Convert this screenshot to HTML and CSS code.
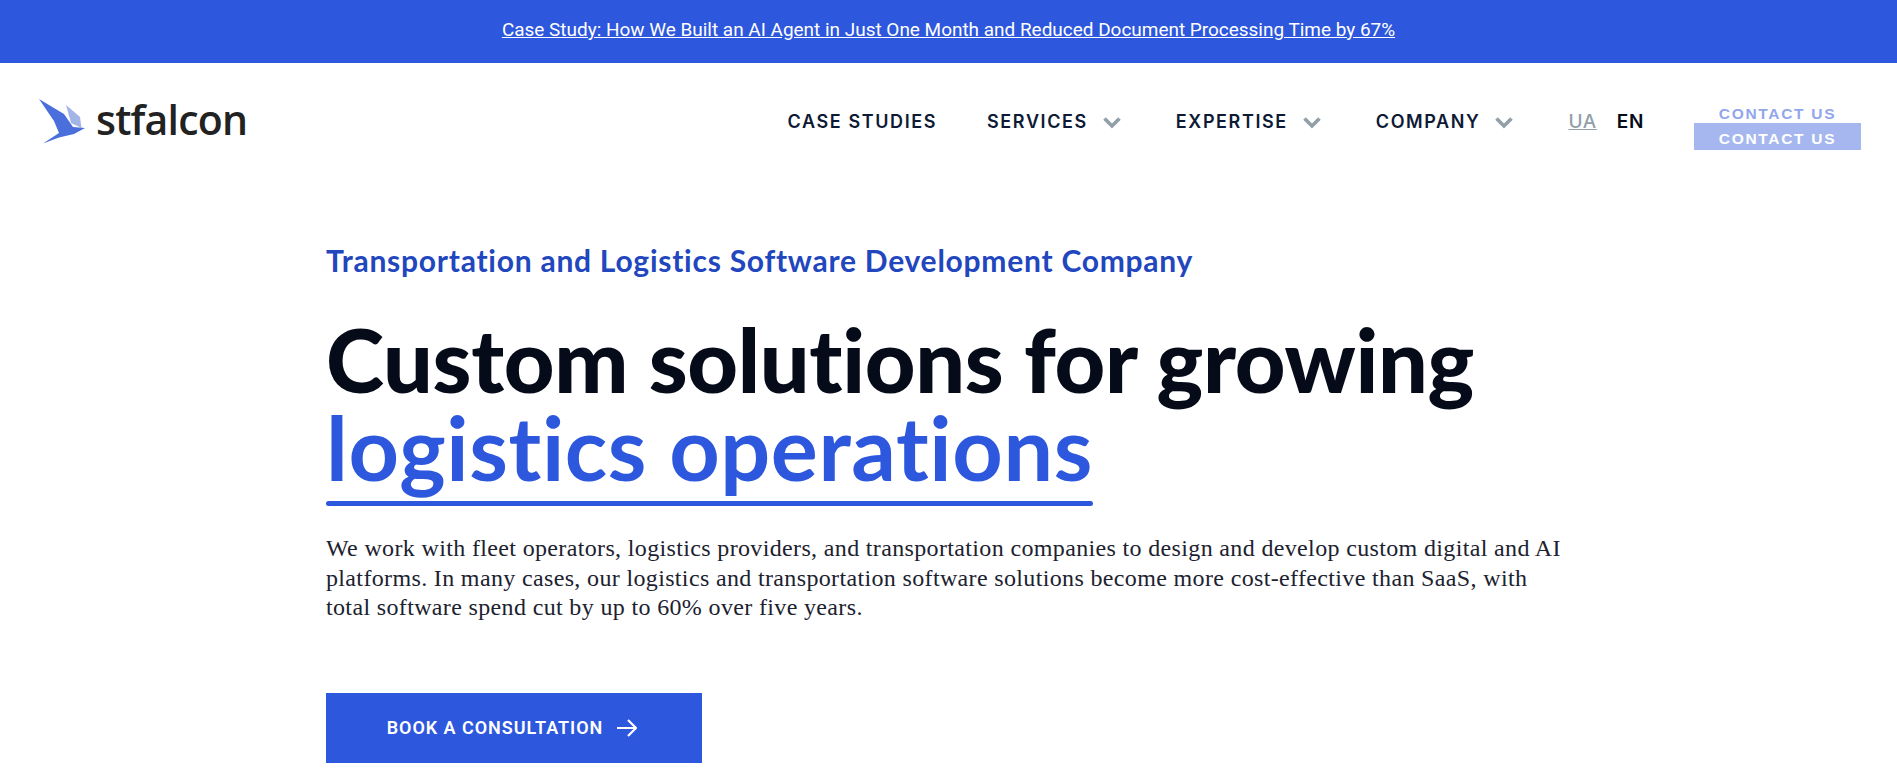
FILE: index.html
```html
<!DOCTYPE html>
<html lang="en">
  <head>
    <meta charset="UTF-8">
    <title>Stfalcon</title>
    <meta name="viewport" content="width=device-width, initial-scale=1.0">
    <link rel="stylesheet" href="styles.css">
  </head>
  <body>

    <div class="promo">
      <a href="#">Case Study: How We Built an AI Agent in Just One Month and Reduced Document Processing Time by 67%</a>
    </div>

    <header class="topbar">
      <a class="logo" href="#">
        <svg class="logo-bird" width="46" height="45" viewBox="0 0 46 45">
          <path fill="#a3b4e6" d="M27 6 L41 18 L42.5 29 L32 24 Z"/>
          <path fill="#4a6fdc" d="M0 0 L25 15 L34 28 L46 29 L35 35 L20 38.5 L4 44.5 L20 34 L15 22 Z"/>
        </svg>
        <span class="logo-text">stfalcon</span>
      </a>

      <nav class="menu">
        <a class="menu-item" href="#">CASE STUDIES</a>
        <a class="menu-item" href="#">SERVICES <svg class="chev" width="18" height="12" viewBox="0 0 18 12"><path d="M1.5 1.5 L9 9 L16.5 1.5" fill="none" stroke="#91a0a8" stroke-width="3.6"/></svg></a>
        <a class="menu-item" href="#">EXPERTISE <svg class="chev" width="18" height="12" viewBox="0 0 18 12"><path d="M1.5 1.5 L9 9 L16.5 1.5" fill="none" stroke="#91a0a8" stroke-width="3.6"/></svg></a>
        <a class="menu-item" href="#">COMPANY <svg class="chev" width="18" height="12" viewBox="0 0 18 12"><path d="M1.5 1.5 L9 9 L16.5 1.5" fill="none" stroke="#91a0a8" stroke-width="3.6"/></svg></a>
      </nav>

      <div class="langs">
        <a class="lang-ua" href="#">UA</a>
        <span class="lang-en">EN</span>
      </div>

      <a class="contact" href="#">
        <span class="contact-top">CONTACT US</span>
        <span class="contact-bottom">CONTACT US</span>
      </a>
    </header>

    <main class="hero">
      <h2 class="hero-kicker">Transportation and Logistics Software Development Company</h2>
      <h1 class="hero-title"><span class="hero-dark">Custom solutions for growing</span><br><span class="hero-accent">logistics operations</span></h1>
      <p class="hero-text">We work with fleet operators, logistics providers, and transportation companies to design and develop custom digital and AI platforms. In many cases, our logistics and transportation software solutions become more cost-effective than SaaS, with total software spend cut by up to 60% over five years.</p>
      <a class="cta" href="#">BOOK A CONSULTATION
        <svg width="20" height="20" viewBox="0 0 20 20"><path d="M0 10 H19 M11 2 L19 10 L11 18" fill="none" stroke="#fff" stroke-width="2.2"/></svg>
      </a>
    </main>

  </body>
</html>
```

FILE: styles.css
```css
* { box-sizing: border-box; }

html, body {
  height: 776px;
  overflow: hidden;
}

body {
  margin: 0;
  background: #fff;
  color: #050b18;
  font-family: Roboto, Arial, sans-serif;
}

a {
  color: inherit;
  text-decoration: none;
}

/* PROMO */
.promo {
  height: 63px;
  padding-bottom: 4px;
  background: #2d57dd;
  color: #fff;
  display: flex;
  align-items: center;
  justify-content: center;
  font-size: 18.97px;
}

.promo a {
  text-decoration: underline;
}

/* HEADER */
.topbar {
  height: 116px;
  padding: 0 36px 0 39px;
  display: flex;
  align-items: center;
}

.logo {
  display: flex;
  align-items: center;
  gap: 11px;
  color: #222;
}

.logo-text {
  margin-top: -5px;
  font-family: "Open Sans", sans-serif;
  font-size: 41px;
  font-weight: 600;
  letter-spacing: -0.8px;
}

.menu {
  margin-left: auto;
  display: flex;
  align-items: center;
  gap: 50px;
}

.menu-item {
  display: flex;
  align-items: center;
  gap: 15px;
  font-family: Inter, sans-serif;
  font-size: 18px;
  font-weight: 600;
  letter-spacing: 1.6px;
  color: #0e1a35;
}

.chev {
  margin: 3px 5px 0 0;
}

.langs {
  margin-left: 50px;
  display: flex;
  gap: 20px;
  font-family: Inter, sans-serif;
  font-size: 19px;
  font-weight: 600;
  letter-spacing: 0.6px;
}

.lang-ua {
  color: #91a0a8;
  font-weight: 500;
  text-decoration: underline;
}

.lang-en {
  color: #050b18;
}

.contact {
  margin: 8px 0 0 50px;
  width: 167px;
  display: flex;
  flex-direction: column;
  align-items: center;
  font-family: "Liberation Sans", Arial, sans-serif;
  font-size: 15.5px;
  font-weight: bold;
  letter-spacing: 1.7px;
}

.contact-top {
  color: #92a6ec;
  height: 22px;
  line-height: 26px;
}

.contact-bottom {
  width: 100%;
  height: 27px;
  line-height: 31px;
  background: #a5b7ee;
  color: #fff;
  text-align: center;
}

/* HERO */
.hero {
  padding: 63px 0 0 326px;
  width: 1580px;
}

.hero-kicker {
  margin: 0;
  font-family: Lato, sans-serif;
  font-size: 30px;
  font-weight: 700;
  line-height: 36px;
  letter-spacing: 0.75px;
  font-variant-ligatures: none;
  color: #2146bd;
}

.hero-title {
  margin: 37px 0 0;
  font-family: Lato, sans-serif;
  font-size: 88px;
  font-weight: 900;
  line-height: 88px;
  font-variant-ligatures: none;
  color: #050b18;
}

.hero-dark {
  letter-spacing: -0.33px;
}

.hero-accent {
  display: inline-block;
  color: #2d57dd;
  font-weight: 700;
  letter-spacing: 0.6px;
}

.hero-accent::after {
  content: "";
  display: block;
  height: 5px;
  margin-top: 10px;
  border-radius: 3px;
  background: #2d57dd;
}

.hero-text {
  margin: 28px 0 0;
  max-width: 1245px;
  font-family: "Liberation Serif", serif;
  font-size: 24px;
  line-height: 29.5px;
  letter-spacing: 0.35px;
  color: #1c2230;
}

.cta {
  margin-top: 70px;
  width: 376px;
  height: 70px;
  padding-right: 4px;
  display: flex;
  align-items: center;
  justify-content: center;
  gap: 14px;
  background: #2d57dd;
  color: #fff;
  font-size: 18px;
  font-weight: 600;
  letter-spacing: 0.95px;
}
```
